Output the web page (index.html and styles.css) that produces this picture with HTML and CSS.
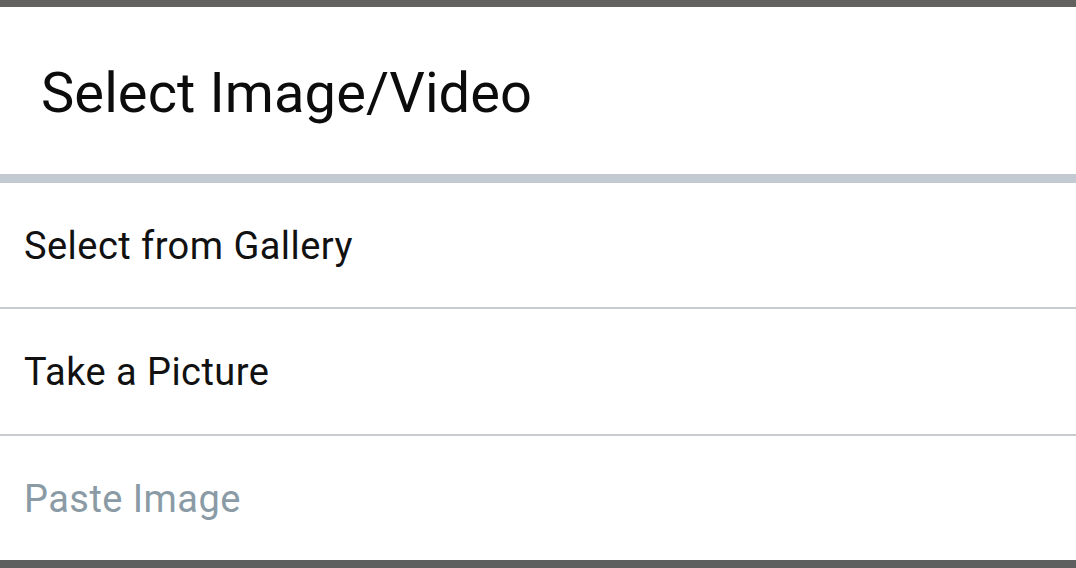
FILE: index.html
```html
<!DOCTYPE html>
<html lang="en">
<head>
    <meta charset="UTF-8">
    <meta name="viewport" content="width=device-width, initial-scale=1.0">
    <title>Select Image/Video</title>
    <link rel="stylesheet" href="styles.css">
</head>
<body>

<div class="dialog">
    <div class="dialog-title">Select Image/Video</div>
    <div class="option">Select from Gallery</div>
    <div class="option">Take a Picture</div>
    <div class="option disabled">Paste Image</div>
</div>

</body>
</html>
```

FILE: styles.css
```css
html, body {
    margin: 0;
    height: 100%;
}
body {
    font-family: Roboto, "Noto Sans", sans-serif;
    background: #fff;
}
.dialog {
    display: flex;
    flex-direction: column;
    height: 568px;
    border-top: 7px solid #63625e;
    border-bottom: 8px solid #5f5f5f;
    box-sizing: border-box;
}
.dialog-title {
    display: flex;
    align-items: center;
    height: 176px;
    padding-left: 41px;
    padding-top: 4px;
    font-size: 56px;
    letter-spacing: 0.1px;
    color: #0c0c0c;
    border-bottom: 9px solid #c3cad1;
    box-sizing: border-box;
}
.option {
    flex: 1;
    display: flex;
    align-items: center;
    padding-left: 24px;
    padding-top: 2px;
    font-size: 38px;
    letter-spacing: 0.45px;
    color: #111;
    border-bottom: 2px solid #c8ccd0;
}
.option:last-child {
    border-bottom: none;
}
.disabled {
    color: #8a9ba6;
}
```
